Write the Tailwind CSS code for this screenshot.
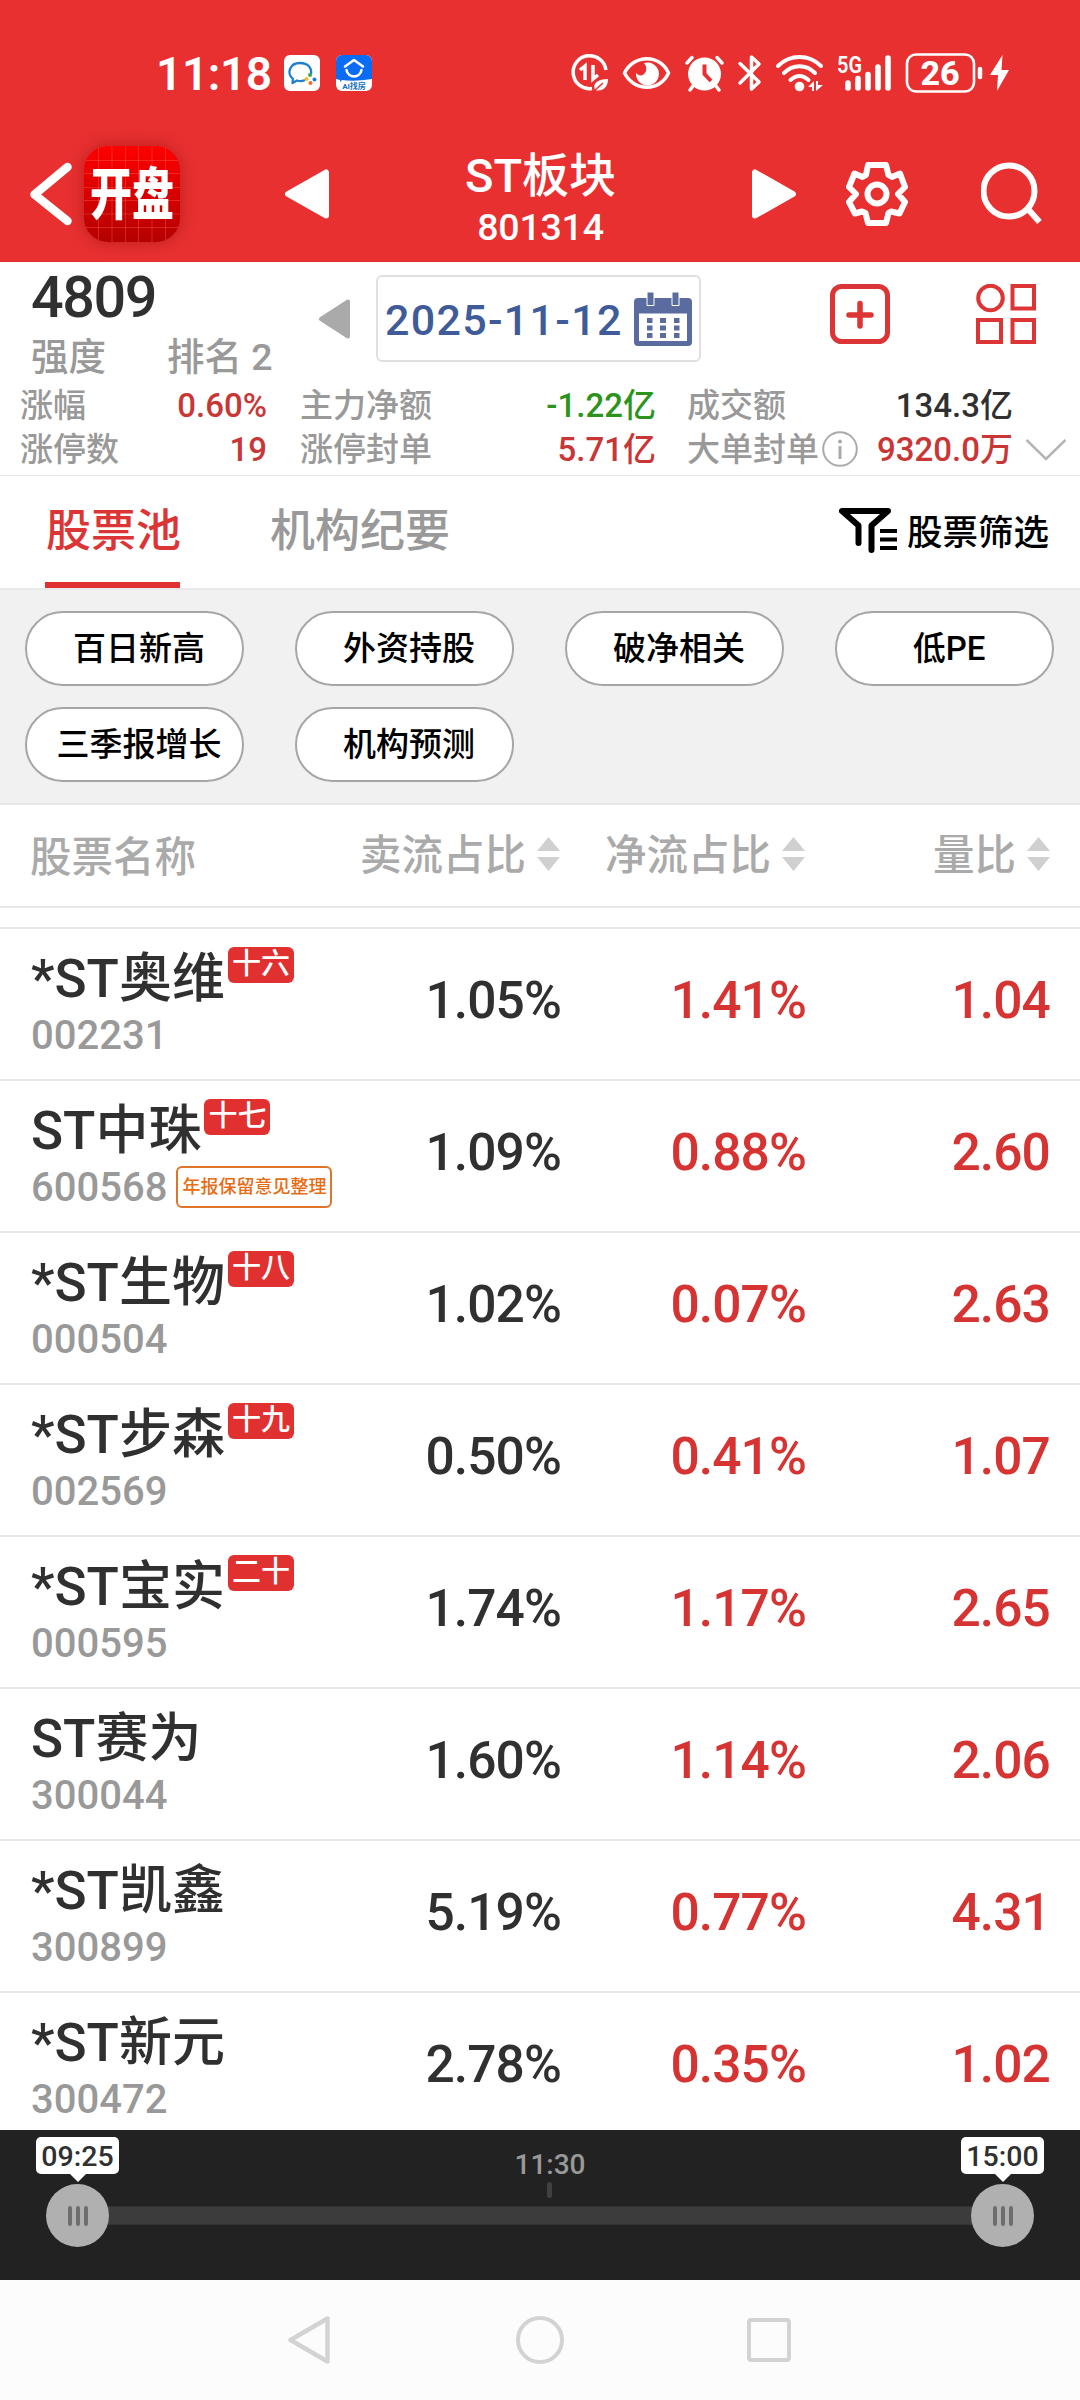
<!DOCTYPE html>
<html lang="zh-CN">
  <head>
    <meta charset="UTF-8" />
    <meta name="viewport" content="width=device-width, initial-scale=1.0" />
    <title>ST板块</title>
    <!-- Tailwind CSS -->
    <script src="https://cdn.jsdelivr.net/npm/@tailwindcss/browser@4"></script>
  </head>
  <body
    class="w-[1080px] h-[2400px] overflow-hidden flex flex-col bg-white text-[#303030] font-medium font-['Roboto','Noto_Sans_CJK_SC',sans-serif]"
  >
    <!-- Header -->
    <header class="h-[262px] shrink-0 bg-[#e83030] text-white">
      <!-- Status bar -->
      <div class="h-[146px] flex items-center pl-[156px] pr-[70px]">
        <span class="w-[128px] pt-px text-[46px] leading-none font-semibold tracking-[-0.4px] whitespace-nowrap">11:18</span>
        <svg class="w-9 h-9" viewBox="0 0 36 36">
          <rect width="36" height="36" rx="6" fill="#fff" />
          <path d="M9 24 C2 18 6 8 16 8 C24 8 28 13 27 19 M9 23 L8.500 28 L13 25.500 C16 26.500 19 26 21 25" fill="none" stroke="#1e7fd0" stroke-width="2.300" stroke-linejoin="round" />
          <circle cx="26" cy="20" r="2" fill="#35a853" />
          <circle cx="22.500" cy="24" r="2" fill="#f5b921" />
          <circle cx="30.500" cy="24.500" r="2" fill="#1e7fd0" />
          <circle cx="26.500" cy="28" r="2" fill="#e8702a" />
        </svg>
        <svg class="w-9 h-9 ml-4" viewBox="0 0 36 36">
          <rect width="36" height="36" rx="6" fill="#fff" />
          <path d="M6 0 H30 A6 6 0 0 1 36 6 V24 Q18 27 6 25 L4 27 L4 25 L0 24 V6 A6 6 0 0 1 6 0Z" fill="#0a6cf5" />
          <path d="M9 11.500 L18 5 L27 11.500 M10.500 15 C12 23.500 24 23.500 25.500 15" fill="none" stroke="#fff" stroke-width="2.500" stroke-linecap="round" stroke-linejoin="round" />
          <text x="18" y="34" text-anchor="middle" font-size="8" font-weight="700" fill="#1a6fc0">AI找房</text>
        </svg>
        <svg class="w-[440px] h-[46px] ml-auto" viewBox="570 50 440 46" fill="none" stroke="#fff">
          <!-- Data saver -->
          <path d="M606 70 A16.500 16.500 0 1 0 592 88.500" stroke-width="3.500" />
          <path d="M580 70 L585 66 V80 M593 65 V79 L598 75" stroke-width="3.500" />
          <path d="M595 90 C592 83 598 79 608 79 C608 88 602 92 595 90Z" fill="#fff" stroke="none" />
          <path d="M593 92 L603 83" stroke="#e83030" stroke-width="1.500" />
          <!-- Eye -->
          <path d="M624.500 73 C634 54 660 54 668.500 73 C660 92 634 92 624.500 73Z" stroke-width="3.500" stroke-linejoin="round" />
          <path d="M644 63 A11.500 11.500 0 1 1 636 73 Q641 78 645 73 Q648 68 644 63Z" fill="#fff" stroke="none" />
          <!-- Alarm -->
          <circle cx="704.500" cy="74" r="16.500" fill="#fff" stroke="none" />
          <path d="M687 63 L692 57.500 M717 57.500 L722 63 M693 86 L690 90 M716 86 L719 90" stroke-width="3.500" stroke-linecap="round" />
          <path d="M704.500 64.500 V74 L711 81" stroke="#e83030" stroke-width="4" />
          <!-- Bluetooth -->
          <path d="M740 63.500 L759 82 L751.500 89 V57 L759 64 L740 83" stroke-width="3.500" stroke-linecap="round" stroke-linejoin="round" />
          <!-- Wifi -->
          <path d="M778 66 C790 54 809 54 821 66 M784 73 C793 64 806 64 815 73 M790.500 80 C796 74.500 803 74.500 808.500 80" stroke-width="4" stroke-linecap="round" />
          <circle cx="799.500" cy="86.500" r="4.800" fill="#fff" stroke="none" />
          <path d="M808 87 L814 81 V91 H812 V87Z M816 81 H818 V85 H823 L816 91Z" fill="#fff" stroke="none" />
          <!-- Signal -->
          <text x="837" y="73" font-size="23" font-weight="600" fill="#fff" stroke="none" textLength="25" lengthAdjust="spacingAndGlyphs">5G</text>
          <path d="M848 83 V88 M858 78.500 V88 M868 74.500 V88 M878 67 V88 M888 58 V88" stroke-width="5.600" stroke-linecap="round" />
          <!-- Battery -->
          <rect x="907" y="54.500" width="67" height="37" rx="9" stroke-width="2.600" />
          <text x="940" y="85" text-anchor="middle" font-size="34" font-weight="800" fill="#fff" stroke="none">26</text>
          <path d="M980 69 V77" stroke-width="4.500" stroke-linecap="round" />
          <path d="M1002.500 55 L990 75 H998 L997 91 L1009 70 H1001.500Z" fill="#fff" stroke="none" />
        </svg>
      </div>

      <!-- Title bar -->
      <div class="h-24 flex items-center pl-[30px] pr-[38px]">
        <svg class="w-[42px] h-16" viewBox="0 0 42 64" fill="none" stroke="#fff" stroke-width="8.500" stroke-linecap="round" stroke-linejoin="round">
          <path d="M37.500 5 L4.500 32.500 L37.500 59" />
        </svg>
        <div class="relative w-24 h-24 ml-3 rounded-[24px] overflow-hidden bg-linear-to-b from-[#ff0000] to-[#b40000] shadow-[0_0_16px_rgba(120,0,0,0.4)] flex items-center justify-center">
          <svg class="absolute inset-0" width="96" height="96" stroke="#ff6050" stroke-opacity="0.400" stroke-width="1">
            <path d="M14.500 0 V96 M28 0 V96 M41.500 0 V96 M54.500 0 V96 M68 0 V96 M81.500 0 V96 M0 14.500 H96 M0 27.500 H96 M0 41.500 H96 M0 54.500 H96 M0 68 H96 M0 81.500 H96" />
          </svg>
          <span class="relative mt-[3px] text-[42px] leading-[52px] font-black scale-y-[1.320] whitespace-nowrap">开盘</span>
        </div>
        <svg class="w-11 h-[50px] ml-[105px]" viewBox="0 0 44 50" fill="#fff" stroke="#fff" stroke-width="6" stroke-linejoin="round">
          <path d="M3 25 L41 3.500 V46.500Z" />
        </svg>
        <div class="flex-1 pt-[14px] text-center leading-[52px]">
          <h1 class="text-[47px]">ST板块</h1>
          <p class="-mt-px text-[37.500px] tracking-[-0.200px]">801314</p>
        </div>
        <svg class="w-11 h-[50px]" viewBox="0 0 44 50" fill="#fff" stroke="#fff" stroke-width="6" stroke-linejoin="round">
          <path d="M41 25 L3 3.500 V46.500Z" />
        </svg>
        <svg class="w-[62px] h-16 ml-[50px]" viewBox="0 0 62 64" fill="none" stroke="#fff" stroke-width="6" stroke-linejoin="round">
          <path d="M22 3 H40 L42.500 13 L46 15 L54 11.500 L59 25 L52 32 L59 40 L53.500 51.500 L45 49.500 L42.500 51 L40 61 H22 L19.500 51 L16 49.500 L9 51.500 L3 40 L10 32 L3 25 L8.500 11.500 L16.500 15 L20 13Z" />
          <circle cx="31" cy="32" r="9.500" />
        </svg>
        <svg class="w-[61px] h-16 ml-[73px]" viewBox="0 0 61 64" fill="none" stroke="#fff" stroke-width="6">
          <circle cx="28" cy="29" r="25.500" />
          <path d="M47 47 L58.500 60" />
        </svg>
      </div>
    </header>

    <!-- Sector summary -->
    <section class="h-[214px] shrink-0 border-b border-[#e8e8e8]">
      <div class="h-[122px] flex items-start pl-[31px]">
        <div class="w-[247px]">
          <div class="pt-px text-[57.500px] leading-[70px] tracking-[-1.400px]">4809</div>
          <div class="w-[246px] flex gap-[61px] text-[37.500px] leading-[49px] text-[#999999] whitespace-nowrap">
            <span>强度</span>
            <span>排名 2</span>
          </div>
        </div>
        <svg class="w-8 h-10 ml-[40px] mt-[37px]" viewBox="0 0 32 40" fill="#aaaaaa" stroke="#aaaaaa" stroke-width="4" stroke-linejoin="round">
          <path d="M3 20 L30 2.500 V37.500Z" />
        </svg>
        <div class="w-[325px] h-[87px] ml-[26px] mt-[13px] pl-[7px] pr-[7px] flex items-center justify-between border-2 border-[#e0e0e0] rounded-[6px]">
          <span class="pt-[3px] text-[43px] text-[#3f5c99] tracking-[1.300px] whitespace-nowrap">2025-11-12</span>
          <svg class="w-[58px] h-[54px]" viewBox="0 0 58 54" fill="#5a6c9f">
            <path d="M4 6 H54 Q58 6 58 10 V50 Q58 54 54 54 H4 Q0 54 0 50 V10 Q0 6 4 6Z M5 21.500 V49 H53 V21.500Z" fill-rule="evenodd" />
            <path d="M13 0 H20 V13.500 H13Z M38 0 H45 V13.500 H38Z" stroke="#fff" stroke-width="1" />
            <path d="M13 26 h5.500 v5 h-5.500z M26 26 h6 v5 h-6z M40 26 h5.500 v5 h-5.500z M13 33.500 h5.500 v5 h-5.500z M26 33.500 h6 v5 h-6z M40 33.500 h5.500 v5 h-5.500z M13 41 h5.500 v5 h-5.500z M26 41 h6 v5 h-6z M40 41 h5.500 v5 h-5.500z" />
          </svg>
        </div>
        <svg class="w-[60px] h-[60px] ml-[129px] mt-[22px]" viewBox="0 0 60 60" fill="none" stroke="#dc3535">
          <rect x="2.500" y="2.500" width="55" height="55" rx="9" stroke-width="5" />
          <path d="M30 19.500 V42 M19 31 H41" stroke-width="5.500" stroke-linecap="round" />
        </svg>
        <svg class="w-[60px] h-[60px] ml-[86px] mt-[22px]" viewBox="0 0 60 60" fill="none" stroke="#dc3535" stroke-width="4">
          <circle cx="14.500" cy="14" r="12.300" />
          <rect x="36.500" y="2" width="21.500" height="22.500" />
          <rect x="2" y="36" width="23" height="22" />
          <rect x="36.500" y="36" width="21.500" height="22" />
        </svg>
      </div>
      <div class="flex pl-5 text-[33px] leading-[44px] whitespace-nowrap">
        <dl class="w-[247px]">
          <div class="flex justify-between">
            <dt class="text-[#999999]">涨幅</dt>
            <dd class="text-[#c93636]">0.60%</dd>
          </div>
          <div class="flex justify-between">
            <dt class="text-[#999999]">涨停数</dt>
            <dd class="text-[#c93636]">19</dd>
          </div>
        </dl>
        <dl class="w-[356px] ml-[33px]">
          <div class="flex justify-between">
            <dt class="text-[#999999]">主力净额</dt>
            <dd class="text-[#2c931c]">-1.22亿</dd>
          </div>
          <div class="flex justify-between">
            <dt class="text-[#999999]">涨停封单</dt>
            <dd class="text-[#c93636]">5.71亿</dd>
          </div>
        </dl>
        <dl class="w-[326px] ml-[31px]">
          <div class="flex justify-between">
            <dt class="text-[#999999]">成交额</dt>
            <dd>134.3亿</dd>
          </div>
          <div class="flex justify-between">
            <dt class="flex items-center text-[#999999]">
              大单封单
              <svg class="w-9 h-9 ml-[3px] -mt-[2px]" viewBox="0 0 36 36" fill="none" stroke="#aaaaaa" stroke-width="2">
                <circle cx="18" cy="18" r="16.800" />
                <path d="M18 15 V28" stroke-width="3" />
                <circle cx="18" cy="10.500" r="1" />
              </svg>
            </dt>
            <dd class="text-[#c93636]">9320.0万</dd>
          </div>
        </dl>
        <svg class="w-10 h-[22px] ml-[13px] mt-[55px]" viewBox="0 0 40 22" fill="none" stroke="#b4b4b4" stroke-width="2.500">
          <path d="M0.500 1 L20 20 L39.500 1" />
        </svg>
      </div>
    </section>

    <!-- Tabs -->
    <nav class="h-[114px] shrink-0 flex pl-[45px] pr-[31px] border-b-2 border-[#e8e8e8] text-[45px] leading-[111px] whitespace-nowrap">
      <a class="h-[112px] w-[135px] pl-px border-b-6 border-[#e03030] text-[#dc3535]">股票池</a>
      <a class="ml-[90px] text-[#999999]">机构纪要</a>
      <a class="ml-auto flex items-center text-[35.500px] text-black">
        <svg class="w-[58px] h-[45px] mr-[10px] -mt-[3px]" viewBox="0 0 58 45" fill="none" stroke="#000">
          <path d="M19.500 35 V17.500 L3 3 H49 L32.500 17.500 V42" stroke-width="6" stroke-linecap="round" stroke-linejoin="round" />
          <path d="M41 23 H58 M41 31.500 H58 M41 40 H58" stroke-width="4" />
        </svg>
        <span class="pt-[3px]">股票筛选</span>
      </a>
    </nav>

    <!-- Filter chips -->
    <div
      class="h-[215px] shrink-0 pt-[21px] pl-[25px] pr-[26px] grid grid-cols-[repeat(4,219px)] auto-rows-[75px] justify-between gap-y-[21px] bg-[#f1f1f1] border-b-2 border-[#e8e8e8] text-[33px] leading-[71px] text-center text-black whitespace-nowrap"
    >
      <button class="bg-white border-2 border-[#a6a6a6] rounded-full pl-[9px]">百日新高</button>
      <button class="bg-white border-2 border-[#a6a6a6] rounded-full pl-[9px]">外资持股</button>
      <button class="bg-white border-2 border-[#a6a6a6] rounded-full pl-[9px]">破净相关</button>
      <button class="bg-white border-2 border-[#a6a6a6] rounded-full pl-[9px]">低PE</button>
      <button class="bg-white border-2 border-[#a6a6a6] rounded-full pl-[9px]">三季报增长</button>
      <button class="bg-white border-2 border-[#a6a6a6] rounded-full pl-[9px]">机构预测</button>
    </div>

    <!-- Table header -->
    <div class="h-[103px] shrink-0 pl-[30px] pr-[30px] flex items-center border-b-2 border-[#e8e8e8] text-[41.500px] leading-[60px] text-[#aaaaaa] whitespace-nowrap">
      <span class="w-[230px] pt-[5px]">股票名称</span>
      <span class="w-[300px] flex items-center justify-end">卖流占比
        <svg class="w-[23px] h-[34px] ml-[11px] -mt-1" viewBox="0 0 23 34" fill="#d0d0d0"><path d="M11.500 0 L23 14 H0Z M11.500 34 L23 20 H0Z" /></svg>
      </span>
      <span class="w-[245px] flex items-center justify-end">净流占比
        <svg class="w-[23px] h-[34px] ml-[11px] -mt-1" viewBox="0 0 23 34" fill="#d0d0d0"><path d="M11.500 0 L23 14 H0Z M11.500 34 L23 20 H0Z" /></svg>
      </span>
      <span class="w-[245px] flex items-center justify-end">量比
        <svg class="w-[23px] h-[34px] ml-[11px] -mt-1" viewBox="0 0 23 34" fill="#d0d0d0"><path d="M11.500 0 L23 14 H0Z M11.500 34 L23 20 H0Z" /></svg>
      </span>
    </div>

    <!-- Stock rows, the list is scrolled so the row above is only just visible -->
    <main id="stock-list" class="h-[1222px] shrink-0 overflow-hidden pt-[19px]"></main>

    <!-- Time range slider -->
    <div class="relative h-[150px] shrink-0 bg-[#222222]">
      <div class="absolute left-[78px] right-[78px] top-[76px] h-[19px] bg-[#3c3c3c] border-y border-[#333333]"></div>
      <div class="absolute left-[480px] w-[140px] top-[19px] text-center text-[28px] leading-[32px] text-[#999999]">11:30</div>
      <div class="absolute left-[547px] top-[52px] w-[5px] h-[16px] rounded-full bg-[#404040]"></div>

      <div class="absolute left-[36px] top-[7px] w-[83px] flex flex-col items-center">
        <div class="w-full h-[37px] rounded-[5px] bg-white text-center text-[28.500px] leading-[39px]">09:25</div>
        <svg class="w-[18px] h-[9px] -mt-px" viewBox="0 0 18 9" fill="#fff"><path d="M0 0 H18 L9 9Z" /></svg>
        <div class="w-[63px] h-[63px] mt-[2px] rounded-full bg-[#b0b0b0] flex items-center justify-center gap-1">
          <i class="w-1 h-5 rounded-full bg-[#6e6e6e]"></i>
          <i class="w-1 h-5 rounded-full bg-[#6e6e6e]"></i>
          <i class="w-1 h-5 rounded-full bg-[#6e6e6e]"></i>
        </div>
      </div>
      <div class="absolute left-[961px] top-[7px] w-[83px] flex flex-col items-center">
        <div class="w-full h-[37px] rounded-[5px] bg-white text-center text-[28.500px] leading-[39px]">15:00</div>
        <svg class="w-[18px] h-[9px] -mt-px" viewBox="0 0 18 9" fill="#fff"><path d="M0 0 H18 L9 9Z" /></svg>
        <div class="w-[63px] h-[63px] mt-[2px] rounded-full bg-[#b0b0b0] flex items-center justify-center gap-1">
          <i class="w-1 h-5 rounded-full bg-[#6e6e6e]"></i>
          <i class="w-1 h-5 rounded-full bg-[#6e6e6e]"></i>
          <i class="w-1 h-5 rounded-full bg-[#6e6e6e]"></i>
        </div>
      </div>
    </div>

    <!-- System navigation -->
    <footer class="h-[120px] shrink-0 pl-[288px] flex items-center bg-[#fcfcfc]">
      <svg class="w-[42px] h-12" viewBox="0 0 42 48" fill="none" stroke="#d3d3d3" stroke-width="4.500" stroke-linejoin="round"><path d="M2.500 24 L39.500 2.500 V45.500Z" /></svg>
      <div class="w-12 h-12 ml-[186px] rounded-full border-4 border-[#d3d3d3]"></div>
      <div class="w-11 h-11 ml-[183px] rounded-[4px] border-4 border-[#d3d3d3]"></div>
    </footer>

    <script>
      const stocks = [
        { name: '*ST奥维', code: '002231', rank: '十六', sell: '1.05%', net: '1.41%', ratio: '1.04' },
        { name: 'ST中珠', code: '600568', rank: '十七', note: '年报保留意见整理', sell: '1.09%', net: '0.88%', ratio: '2.60' },
        { name: '*ST生物', code: '000504', rank: '十八', sell: '1.02%', net: '0.07%', ratio: '2.63' },
        { name: '*ST步森', code: '002569', rank: '十九', sell: '0.50%', net: '0.41%', ratio: '1.07' },
        { name: '*ST宝实', code: '000595', rank: '二十', sell: '1.74%', net: '1.17%', ratio: '2.65' },
        { name: 'ST赛为', code: '300044', sell: '1.60%', net: '1.14%', ratio: '2.06' },
        { name: '*ST凯鑫', code: '300899', sell: '5.19%', net: '0.77%', ratio: '4.31' },
        { name: '*ST新元', code: '300472', sell: '2.78%', net: '0.35%', ratio: '1.02' },
      ];

      // Render one row per stock
      document.getElementById('stock-list').innerHTML = stocks
        .map((stock) => {
          const rank = stock.rank
            ? `<span class="w-[66px] h-9 ml-[3px] mt-1 rounded-[6px] bg-[#e03030] text-white text-[29px] leading-[35px] text-center">${stock.rank}</span>`
            : '';
          const note = stock.note
            ? `<span class="w-[156px] h-[42px] ml-[9px] -mt-[2px] rounded-[6px] border-2 border-[#e07428] text-[#e86c14] text-[18px] leading-[38px] text-center">${stock.note}</span>`
            : '';
          return `
            <div class="h-[152px] pl-[31px] pr-[30px] flex border-t-2 border-[#e8e8e8] whitespace-nowrap">
              <div class="w-[342px] pt-[14px]">
                <div class="h-[70px] flex items-start text-[53px] leading-[73px]">
                  <span>${stock.name}</span>${rank}
                </div>
                <div class="h-[46px] flex items-center text-[40px] leading-[46px] text-[#999999]">
                  <span>${stock.code}</span>${note}
                </div>
              </div>
              <div class="w-[188px] text-right text-[51.500px] leading-[143px] tracking-[-0.900px]">${stock.sell}</div>
              <div class="w-[245px] text-right text-[51.500px] leading-[143px] tracking-[-0.900px] text-[#d63333]">${stock.net}</div>
              <div class="w-[244px] text-right text-[51.500px] leading-[143px] tracking-[-0.900px] text-[#d63333]">${stock.ratio}</div>
            </div>
          `;
        })
        .join('');
    </script>
  </body>
</html>
